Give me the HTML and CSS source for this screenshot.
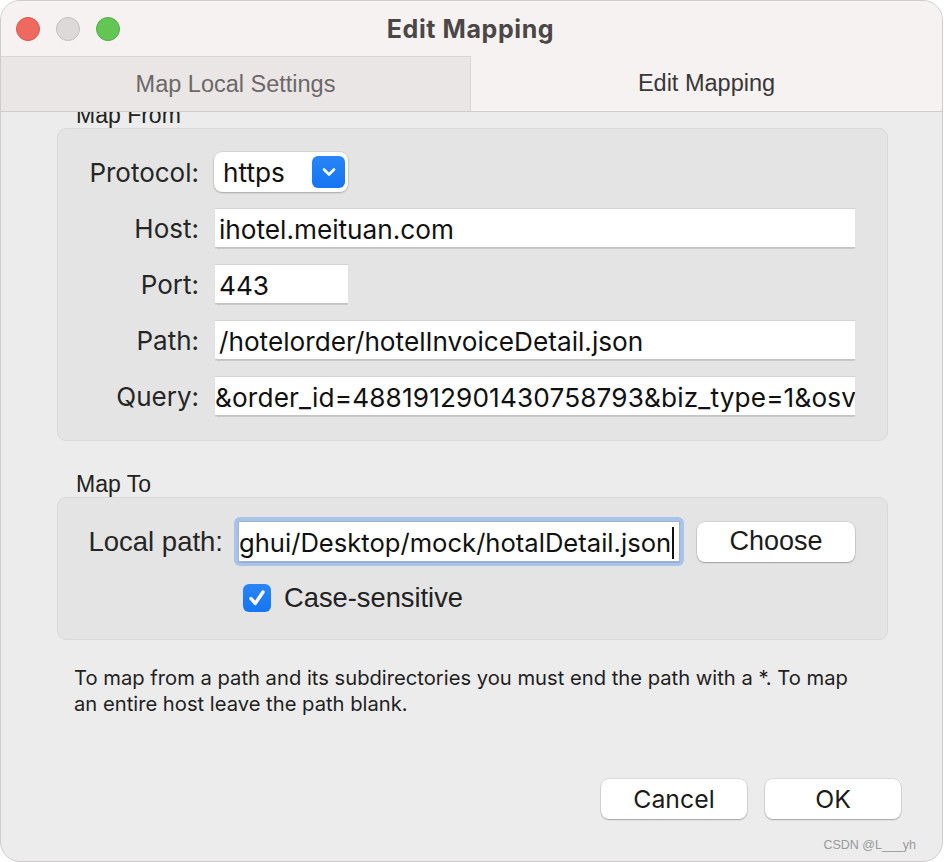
FILE: index.html
```html
<!DOCTYPE html>
<html>
<head>
<meta charset="utf-8">
<title>Edit Mapping</title>
<link rel="stylesheet" href="styles.css">
</head>
<body>
<div class="window">
  <div class="titlebar">
    <div class="lights">
      <span class="light red"></span>
      <span class="light gray"></span>
      <span class="light green"></span>
    </div>
    <div class="title">Edit Mapping</div>
    <div></div>
  </div>
  <div class="tabs">
    <div class="tab inactive">Map Local Settings</div>
    <div class="tab active">Edit Mapping</div>
  </div>
  <div class="content">
    <div class="group-label first">Map From</div>
    <div class="group from">
      <div class="label">Protocol:</div>
      <div class="popup">
        <span class="popup-text">https</span>
        <span class="popup-knob">
          <svg width="18" height="12" viewBox="0 0 18 12"><path d="M4 3.5 L9 8.5 L14 3.5" fill="none" stroke="#fff" stroke-width="2.6" stroke-linecap="round" stroke-linejoin="round"/></svg>
        </span>
      </div>
      <div class="label">Host:</div>
      <div class="field"><span>ihotel.meituan.com</span></div>
      <div class="label">Port:</div>
      <div class="field port"><span>443</span></div>
      <div class="label">Path:</div>
      <div class="field"><span>/hotelorder/hotelInvoiceDetail.json</span></div>
      <div class="label">Query:</div>
      <div class="field flush query"><span>&amp;order_id=4881912901430758793&amp;biz_type=1&amp;osv</span></div>
    </div>
    <div class="group-label">Map To</div>
    <div class="group to">
      <div class="to-row">
        <div class="label narrow local">Local path:</div>
        <div class="focus-ring">
          <div class="field focused"><span>ghui/Desktop/mock/hotalDetail.json</span><span class="caret"></span></div>
        </div>
        <button class="btn choose">Choose</button>
      </div>
      <label class="check-row">
        <span class="checkbox">
          <svg width="22" height="22" viewBox="0 0 22 22"><path d="M5 11.5 L9.2 16.5 L17 5" fill="none" stroke="#fff" stroke-width="3.4" stroke-linecap="round" stroke-linejoin="round"/></svg>
        </span>
        <span class="check-text">Case-sensitive</span>
      </label>
    </div>
    <p class="help">To map from a path and its subdirectories you must end the path with a *. To map<br>an entire host leave the path blank.</p>
    <div class="buttons">
      <button class="btn cancel">Cancel</button>
      <button class="btn ok">OK</button>
    </div>
  </div>
  <div class="watermark">CSDN @L___yh</div>
</div>
</body>
</html>
```
FILE: styles.css
```css
* { box-sizing: border-box; }
html, body { margin: 0; padding: 0; }
body {
  background: #ffffff;
  width: 944px;
  height: 862px;
  overflow: hidden;
  font-family: Inter, "Noto Sans", sans-serif;
  color: #222;
}
.window {
  position: relative;
  width: 943px;
  height: 862px;
  border: 1px solid #cfcccc;
  border-radius: 20px;
  overflow: hidden;
  background: #ececec;
  display: flex;
  flex-direction: column;
}
.titlebar {
  height: 55px;
  flex: none;
  background: #f7f2f2;
  display: grid;
  grid-template-columns: 1fr auto 1fr;
  align-items: center;
}
.lights {
  display: flex;
  gap: 16px;
  padding-left: 15px;
}
.light {
  width: 24px;
  height: 24px;
  border-radius: 50%;
  display: block;
}
.light.red { background: #ee6a5f; border: 1px solid #d9564c; }
.light.gray { background: #ddd9d9; border: 1px solid #c2bebe; }
.light.green { background: #62c554; border: 1px solid #4fad43; }
.title {
  font-weight: 700;
  font-size: 25px;
  color: #4b4747;
  letter-spacing: 0.6px;
  padding-right: 2px;
}
.tabs {
  height: 56px;
  flex: none;
  display: grid;
  grid-template-columns: 470px 1fr;
  border-bottom: 1px solid #cfcccc;
  position: relative;
  z-index: 2;
}
.tab {
  display: flex;
  align-items: center;
  justify-content: center;
  font-family: "Liberation Sans", Arial, sans-serif;
  font-size: 23.5px;
}
.tab.inactive {
  background: #ebe6e6;
  color: #6c6868;
  border-top: 1px solid #d9d5d5;
  border-right: 1px solid #d9d5d5;
}
.tab.active {
  background: #f7f2f2;
  color: #3a3737;
}
.content {
  flex: 1;
  display: flex;
  flex-direction: column;
  padding: 0 0 42px 0;
  overflow: hidden;
}
.group-label {
  font-family: "Liberation Sans", Arial, sans-serif;
  font-size: 23px;
  line-height: 26px;
  height: 26px;
  color: #222;
  padding-left: 75px;
  margin-top: 30px;
}
.group-label.first { margin-top: -10px; }
.group {
  margin-left: 56px;
  width: 831px;
  background: #e4e4e4;
  border: 1px solid #d9d9d9;
  border-radius: 9px;
}
.group.from {
  display: grid;
  grid-template-columns: 141px 1fr;
  column-gap: 16px;
  row-gap: 16px;
  grid-auto-rows: 40px;
  padding: 23px 32px 24px 0;
  align-items: center;
}
.label {
  text-align: right;
  font-size: 26px;
  color: #262626;
}
.field {
  height: 40px;
  background: #fff;
  border-top: 1px solid #d2d2d2;
  border-bottom: 1px solid #c4c4c4;
  box-shadow: 0 0.5px 1px rgba(0,0,0,0.12);
  display: flex;
  align-items: center;
  padding: 3px 0 0 4px;
  overflow: hidden;
  white-space: nowrap;
  font-size: 26.2px;
  color: #111;
}
.field.port { width: 133px; }
.field.flush { padding-left: 0; }
.field.query { letter-spacing: 0.15px; }
.popup {
  width: 134px;
  height: 40px;
  margin-left: -1px;
  background: #fff;
  border-radius: 8px;
  box-shadow: 0 0 0 0.5px rgba(0,0,0,0.12), 0 1px 2px rgba(0,0,0,0.22);
  display: flex;
  align-items: center;
  justify-content: space-between;
  padding: 0 3px 0 9px;
}
.popup-text { font-size: 26.2px; color: #111; }
.popup-knob {
  width: 33px;
  height: 32px;
  border-radius: 6px;
  background: linear-gradient(#2a86f7, #1475f2);
  display: flex;
  align-items: center;
  justify-content: center;
}
.group.to {
  padding: 19px 0 27px 0;
  display: flex;
  flex-direction: column;
  gap: 18px;
}
.to-row {
  display: flex;
  align-items: center;
}
.label.narrow {
  font-family: "Liberation Sans", Arial, sans-serif;
  font-size: 27.5px;
}
.label.local { width: 165px; }
.focus-ring {
  margin-left: 11px;
  width: 450px;
  height: 49px;
  padding: 4px;
  border-radius: 6px;
  background: #a9c4ea;
}
.field.focused {
  height: 41px;
  border: 1px solid #9fb4d2;
  padding: 2px 0 0 0;
  font-size: 25.6px;
}
.caret {
  display: inline-block;
  width: 2px;
  height: 32px;
  background: #111;
  margin-left: 1px;
}
.btn {
  background: #fff;
  border: none;
  border-radius: 8px;
  box-shadow: 0 0 0 0.5px rgba(0,0,0,0.14), 0 1px 1.5px rgba(0,0,0,0.25);
  height: 40px;
  padding: 0;
  font-family: Inter, "Noto Sans", sans-serif;
  font-size: 24.8px;
  color: #1c1c1c;
}
.btn.choose {
  margin-left: 13px;
  width: 158px;
  font-family: "Liberation Sans", Arial, sans-serif;
  font-size: 27px;
}
.check-row {
  display: flex;
  align-items: center;
  gap: 13px;
  padding-left: 185px;
  height: 28px;
}
.checkbox {
  width: 28px;
  height: 28px;
  border-radius: 6px;
  background: linear-gradient(#2a86f7, #1475f2);
  display: flex;
  align-items: center;
  justify-content: center;
}
.check-text {
  font-family: "Liberation Sans", Arial, sans-serif;
  font-size: 27.3px;
  color: #222;
}
.help {
  margin: 25px 0 0 0;
  padding-left: 73px;
  font-family: Inter, "Noto Sans", sans-serif;
  font-size: 20.2px;
  line-height: 26px;
  color: #1f1f1f;
}
.buttons {
  margin-top: auto;
  display: flex;
  justify-content: flex-end;
  gap: 18px;
  padding-right: 41px;
}
.btn.cancel { width: 146px; }
.btn.ok { width: 136px; }
.watermark {
  position: absolute;
  right: 26px;
  bottom: 9px;
  font-family: "Liberation Sans", Arial, sans-serif;
  font-size: 12.5px;
  color: #9a9a9a;
}
```
